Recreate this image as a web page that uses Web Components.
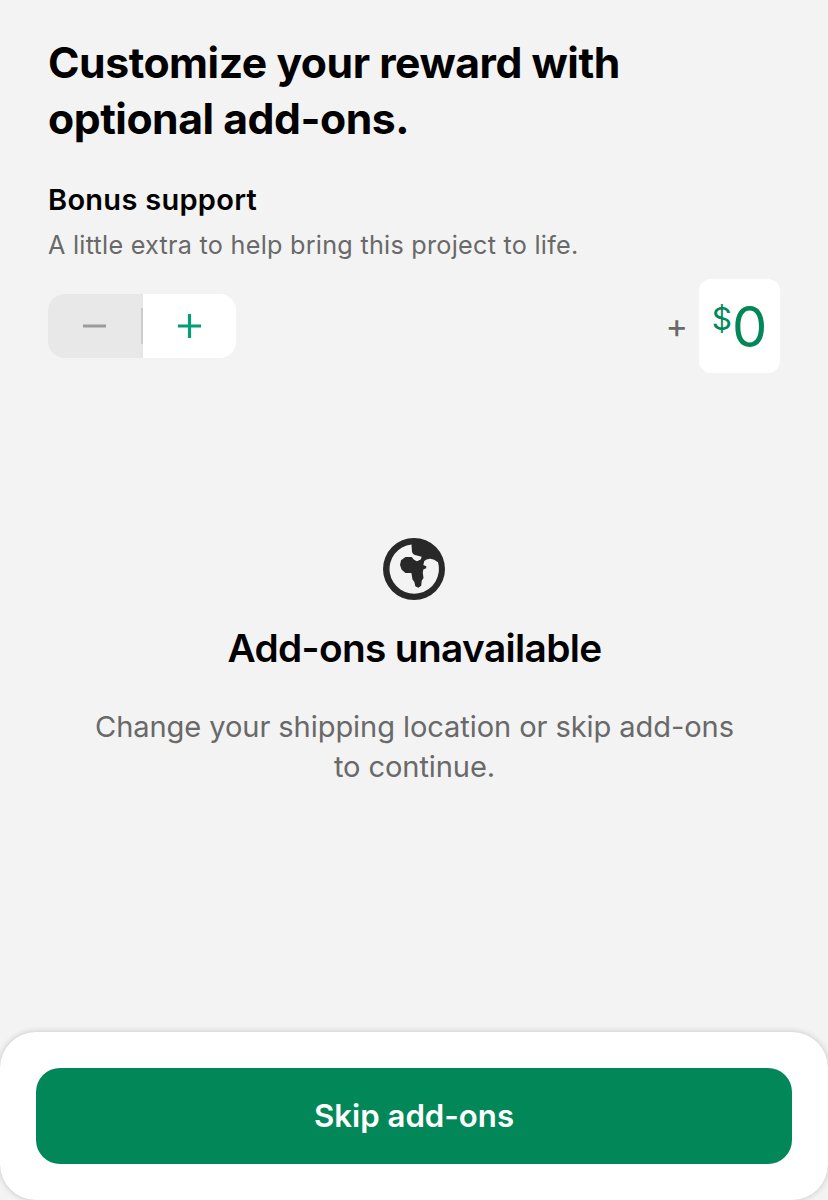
<!DOCTYPE html>
<html lang="en"><head><meta charset="utf-8"><title>Add-ons</title>
<style>html,body{margin:0;height:100%;background:#f3f3f3}body{font-family:Inter,sans-serif;color:#000}</style></head><body>
<addons-page></addons-page>
<script>
const define=(name,html)=>customElements.define(name,class extends HTMLElement{constructor(){super();this.attachShadow({mode:'open'}).innerHTML=html}});
define('quantity-stepper',`<style>:host{display:grid;grid-template-columns:93px 2px 93px;width:188px;height:64px;border-radius:16px;overflow:hidden;background:#fff}
.b{display:grid;place-items:center}.minus{background:#e8e8e8}.gap{background:#e5e5e5;display:grid;align-items:center}.div{height:36px;background:#cbcbcb}svg{display:block}</style>
<div class="b minus"><svg width="23" height="24"><path d="M0 12H23" stroke="#9b9b9b" stroke-width="3.200"/></svg></div><div class="gap"><div class="div"></div></div><div class="b"><svg width="23" height="24"><path d="M0 12H23M11.500 0V24" stroke="#039e75" stroke-width="3.200"/></svg></div>`);
define('amount-box',`<style>:host{display:flex;align-items:center}.p{font-size:34px;line-height:40px;color:#696969;margin-right:11px}.box{width:81px;height:94px;border-radius:12px;background:#fff;color:#028858;display:flex;justify-content:center}.d{font-size:31.500px;line-height:79px;margin-left:-1px}.n{font-size:56px;line-height:97px;letter-spacing:-1px}</style><span class="p">+</span><div class="box"><span class="d">$</span><span class="n">0</span></div>`);
define('unavailable-state',`<style>:host{display:flex;flex-direction:column;align-items:center;text-align:center}svg{display:block}.t{font-size:38.800px;line-height:48px;font-weight:600;letter-spacing:-.64px;margin-top:24px;padding-left:1px}.s{font-size:29.100px;line-height:40px;letter-spacing:-.1px;color:#696969;margin-top:35px;padding-left:1px}</style>
<svg width="62" height="62" viewBox="0 0 62 62"><circle cx="31" cy="31" r="31" fill="#282828"/><path fill="#f3f3f3" d="M28.500 6.400L29 13.700Q29.500 16.600 34 17.600L38.700 18.700L37.700 21.500L34 23.200L31 21.700L28.700 19H22.500L18 22.300L17 27L18.700 31.800L22.500 35H28.400L29.500 41.500L31.400 44L32.300 48.300L35.300 49.800L38.200 47.700L38.700 42.800L40.500 40L39.800 34.500L40.300 31.500L43.200 30.300L43.300 28.300L40.300 27L41.300 23Q43 21.200 47 20.700Q51 20.500 55 24.300A24.700 24.700 0 1 1 28.500 6.400Z"/></svg><div class="t">Add-ons unavailable</div><div class="s">Change your shipping location or skip add-ons<br>to continue.</div>`);
define('bottom-bar',`<style>:host{display:block;background:#fff;border-radius:36px;padding:36px;box-sizing:border-box;height:168px;box-shadow:0 0 6px #0003}button{all:unset;display:block;width:100%;height:96px;border-radius:24px;background:#028858;color:#fff;font-size:31.200px;line-height:94px;font-weight:600;letter-spacing:0;text-align:center}</style><button><slot></slot></button>`);
define('addons-page',`<style>:host{display:flex;flex-direction:column;width:828px;height:1200px;overflow:hidden}main{padding:35px 48px 0;flex:1}h1{font-size:42.700px;line-height:56px;margin:0;font-weight:700;letter-spacing:-.47px}h2{font-size:29px;line-height:36px;font-weight:600;letter-spacing:.28px;margin:35px 0 0}p{font-size:25.200px;line-height:32px;letter-spacing:.26px;margin:11px 0 0;color:#696969}.row{display:flex;justify-content:space-between;align-items:center;margin-top:18px}unavailable-state{margin-top:165px}</style>
<main><h1>Customize your reward with<br>optional add-ons.</h1><h2>Bonus support</h2><p>A little extra to help bring this project to life.</p><div class="row"><quantity-stepper></quantity-stepper><amount-box></amount-box></div><unavailable-state></unavailable-state></main><bottom-bar>Skip add-ons</bottom-bar>`);
</script></body></html>
